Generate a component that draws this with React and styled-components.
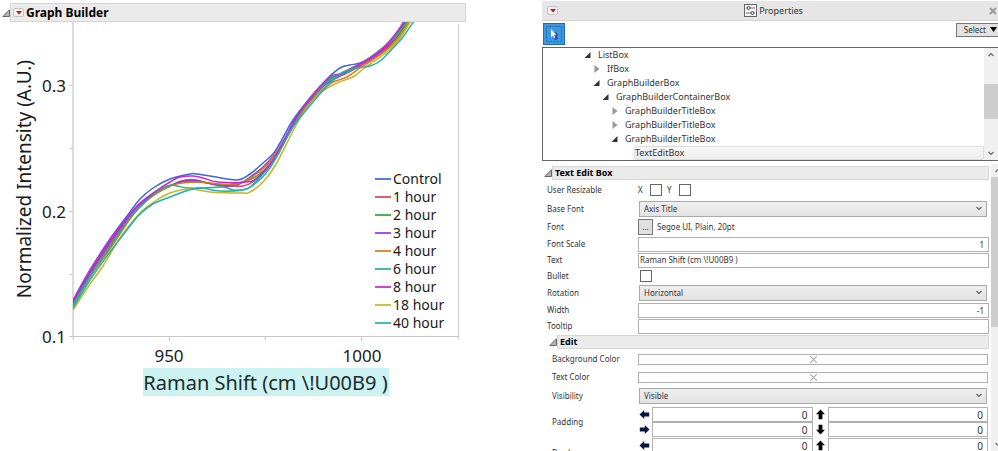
import React, { useState } from "react";
import styled, { createGlobalStyle, css } from "styled-components";

const series = [
  {
    name: "Control",
    color: "#3a68d8",
    points: [[73, 300], [90, 270], [110, 239], [130, 212], [140, 199], [153, 188], [170, 179], [190, 174], [197, 174], [210, 176], [237, 180], [250, 174], [263, 163], [273, 154], [280, 143], [293, 120], [310, 98], [327, 79], [340, 68], [350, 65], [360, 63], [373, 56], [387, 45], [397, 33], [404, 21]],
  },
  {
    name: "1 hour",
    color: "#d9405a",
    points: [[73, 303], [90, 274], [110, 244], [130, 217], [140, 206], [153, 195], [170, 186], [182, 182], [200, 182], [220, 185], [243, 186], [254, 181], [268, 168], [282, 146], [294, 124], [310, 101], [330, 80], [345, 74], [360, 66], [380, 54], [395, 40], [408, 21]],
  },
  {
    name: "2 hour",
    color: "#2fa33a",
    points: [[73, 304], [90, 276], [110, 247], [130, 218], [140, 206], [153, 195], [170, 186], [182, 181], [195, 180], [208, 183], [225, 185], [243, 182], [257, 176], [270, 164], [283, 144], [295, 123], [310, 100], [328, 80], [340, 74], [360, 64], [380, 52], [395, 39], [408, 21]],
  },
  {
    name: "3 hour",
    color: "#9a35dd",
    points: [[73, 302], [90, 273], [110, 242], [130, 215], [140, 204], [153, 194], [170, 186], [182, 181], [193, 180], [208, 183], [222, 186], [237, 185], [250, 177], [263, 167], [275, 154], [285, 138], [296, 118], [310, 100], [325, 85], [340, 76], [357, 66], [375, 56], [390, 43], [406, 21]],
  },
  {
    name: "4 hour",
    color: "#d67a20",
    points: [[73, 305], [90, 277], [110, 249], [130, 219], [140, 207], [153, 196], [170, 186], [182, 183], [200, 182], [220, 184], [237, 184], [252, 177], [266, 166], [280, 147], [292, 128], [307, 106], [323, 89], [333, 82], [347, 77], [360, 68], [380, 55], [396, 41], [410, 21]],
  },
  {
    name: "6 hour",
    color: "#25b189",
    points: [[73, 306], [90, 276], [110, 246], [130, 218], [140, 207], [153, 195], [163, 188], [171, 185], [177, 186], [188, 188], [203, 188], [223, 187], [233, 190], [242, 190], [250, 187], [260, 177], [275, 158], [290, 131], [305, 105], [320, 88], [335, 77], [350, 71], [363, 62], [380, 50], [395, 37], [407, 21]],
  },
  {
    name: "8 hour",
    color: "#d022d0",
    points: [[73, 301], [90, 271], [110, 240], [130, 214], [140, 203], [153, 193], [170, 182], [180, 177], [193, 176], [203, 178], [218, 182], [247, 182], [257, 178], [270, 164], [283, 143], [295, 120], [310, 98], [330, 77], [340, 74], [350, 69], [367, 60], [383, 48], [393, 37], [405, 21]],
  },
  {
    name: "18 hour",
    color: "#c3b723",
    points: [[73, 310], [88, 287], [103, 266], [120, 238], [140, 213], [157, 200], [170, 193], [190, 189], [210, 192], [242, 193], [250, 192], [263, 182], [275, 166], [290, 137], [303, 113], [320, 93], [337, 83], [353, 77], [363, 69], [373, 62], [383, 55], [397, 42], [411, 21]],
  },
  {
    name: "40 hour",
    color: "#22b0b5",
    points: [[73, 308], [90, 280], [110, 252], [130, 226], [140, 214], [153, 204], [170, 197], [183, 192], [193, 189], [202, 188], [220, 191], [242, 190], [252, 186], [267, 172], [280, 151], [293, 127], [313, 102], [330, 83], [343, 72], [357, 68], [370, 66], [380, 61], [393, 48], [403, 37], [414, 21]],
  },
];

const tree = [
  { name: "ListBox", depth: 0, open: true },
  { name: "IfBox", depth: 1, open: false },
  { name: "GraphBuilderBox", depth: 1, open: true },
  { name: "GraphBuilderContainerBox", depth: 2, open: true },
  { name: "GraphBuilderTitleBox", depth: 3, open: false },
  { name: "GraphBuilderTitleBox", depth: 3, open: false },
  { name: "GraphBuilderTitleBox", depth: 3, open: true },
  { name: "TextEditBox", depth: 4, leaf: true },
];

// catmull-rom through the samples
const toPath = (p) => {
  let d = `M${p[0][0]} ${p[0][1]}`;
  for (let i = 0; i < p.length - 1; i++) {
    const a = p[i - 1] || p[i];
    const b = p[i];
    const c = p[i + 1];
    const e = p[i + 2] || c;
    d += ` C${b[0] + (c[0] - a[0]) / 6} ${b[1] + (c[1] - a[1]) / 6} ${
      c[0] - (e[0] - b[0]) / 6
    } ${c[1] - (e[1] - b[1]) / 6} ${c[0]} ${c[1]}`;
  }
  return d;
};

const Disclosure = () => (
  <svg width="8" height="8" viewBox="0 0 8 8" aria-hidden="true">
    <path d="M7.5 .8v6.7H.8z" fill="#b5b5b5" stroke="#666" />
  </svg>
);

const TreeArrow = ({ open }) => (
  <svg width="8" height="8" viewBox="0 0 8 8" aria-hidden="true">
    {open ? (
      <path d="M6.500 1v6H.5z" fill="#333" />
    ) : (
      <path d="M1.500 0v8l5-4z" fill="#999" />
    )}
  </svg>
);

const RedTriangle = () => (
  <svg width="10" height="8" viewBox="0 0 10 8" aria-hidden="true">
    <path d="M2 2h6L5 5.500z" fill="#d00d14" />
  </svg>
);

const Chevron = ({ up }) => (
  <svg width="6" height="5" viewBox="0 0 6 5" aria-hidden="true">
    <path
      d={up ? "M.5 4 3 1.500 5.500 4" : "M.5 1 3 3.500 5.500 1"}
      fill="none"
      stroke="#666"
      strokeWidth="1.2"
    />
  </svg>
);

const Cross = ({ size, color, width }) => (
  <svg width={size} height={size} viewBox="0 0 8 8" aria-hidden="true">
    <path d="M1 1l6 6M7 1L1 7" stroke={color} strokeWidth={width} />
  </svg>
);

const angles = { right: 0, down: 90, left: 180, up: 270 };
const Arrow = ({ to }) => {
  const vertical = to === "up" || to === "down";
  return (
    <svg width="11" height="11" viewBox="0 0 11 11" aria-hidden="true">
      <path
        d="M.8 3.600h5V1L10.500 5.500 5.800 10V7.400h-5z"
        fill={vertical ? "#000" : "#0b1440"}
        transform={`rotate(${angles[to]} 5.500 5.500)`}
      />
    </svg>
  );
};

const GraphBuilder = () => {
  const [title, setTitle] = useState("Raman Shift (cm \\!U00B9 )");

  return (
    <GraphPanel>
      <Outline>
        <Disclosure />
        <GraphHeader>
          <MenuButton aria-label="Graph Builder menu">
            <RedTriangle />
          </MenuButton>
          Graph Builder
        </GraphHeader>
      </Outline>
      <Plot>
        <YTitle>Normalized Intensity (A.U.)</YTitle>
        <Chart viewBox="40 22 426 346" role="img" aria-label="Raman spectra">
          <clipPath id="frame">
            <rect x="73" y="22" width="385" height="314" />
          </clipPath>
          <path d="M73 22V337" stroke="#dcdcdc" strokeWidth="2" />
          <path
            d="M69 85.500h4M69 211.500h4M69 336.500h389M70 148.500h3M70 274.500h3"
            stroke="#c8c8c8"
          />
          <path
            d="M458.500 24v315M73.500 337v3M169.500 337v4M265.500 337v3M361.500 337v4"
            stroke="#c8c8c8"
          />
          <g clipPath="url(#frame)" fill="none" strokeWidth="1.500">
            {series.map((s) => (
              <path key={s.name} d={toPath(s.points)} stroke={s.color} />
            ))}
          </g>
          <g fontSize="17" fill="#1a1a1a">
            <text x="66" y="92" textAnchor="end">0.3</text>
            <text x="66" y="218" textAnchor="end">0.2</text>
            <text x="66" y="343" textAnchor="end">0.1</text>
            <text x="169" y="362" textAnchor="middle">950</text>
            <text x="362" y="362" textAnchor="middle">1000</text>
          </g>
          <g fontSize="14" fill="#1a1a1a">
            {series.map((s, i) => (
              <React.Fragment key={s.name}>
                <path
                  d={`M375 ${179 + i * 18}h16`}
                  stroke={s.color}
                  strokeWidth="2"
                  opacity=".85"
                />
                <text x="393" y={184 + i * 18}>{s.name}</text>
              </React.Fragment>
            ))}
          </g>
        </Chart>
        <XTitle
          aria-label="X axis title"
          value={title}
          onChange={(e) => setTitle(e.target.value)}
        />
      </Plot>
    </GraphPanel>
  );
};

const Dropdown = ({ id, value }) => (
  <SelectWrap>
    <Select id={id} defaultValue={value}>
      <option>{value}</option>
    </Select>
    <Chevron />
  </SelectWrap>
);

const Sides = ({ label, pairs }) => (
  <Row $inset>
    <span>{label}</span>
    <SideGrid>
      {pairs.flat().map((side) => (
        <React.Fragment key={side}>
          <Arrow to={side} />
          <Field $number $large aria-label={`${label} ${side}`} defaultValue="0" />
        </React.Fragment>
      ))}
    </SideGrid>
  </Row>
);

const Properties = () => (
  <PropertiesPanel>
    <TitleBar>
      <MenuButton aria-label="Properties menu">
        <RedTriangle />
      </MenuButton>
      <TitleText>
        <svg width="13" height="13" viewBox="0 0 13 13" aria-hidden="true">
          <rect x=".5" y=".5" width="12" height="12" fill="#f4f4f4" stroke="#666" />
          <path d="M2 4h9M2 9h9" stroke="#777" />
          <circle cx="4.500" cy="4" r="1.500" fill="#ddd" stroke="#555" />
          <circle cx="8.500" cy="9" r="1.500" fill="#ddd" stroke="#555" />
        </svg>
        Properties
      </TitleText>
      <CloseButton aria-label="Close">
        <Cross size="8" color="#999" width="1.800" />
      </CloseButton>
    </TitleBar>
    <Toolbar>
      <PickButton aria-label="Pick box">
        <svg width="18" height="18" viewBox="0 0 18 18" aria-hidden="true">
          <rect
            x="1.500"
            y="1.500"
            width="15"
            height="15"
            fill="none"
            stroke="#1d6cb8"
            strokeDasharray="2 1"
          />
          <path d="M8 10l2 5 3-1-1.500-3 2-.5-3-4z" fill="#3048b0" />
          <path d="M6 4v8.500l2-2 1.200 2.500 1-.6-1-2.400h2.300z" fill="#fff" />
        </svg>
      </PickButton>
      <SelectMenu>
        Select
        <svg width="8" height="6" viewBox="0 0 8 6" aria-hidden="true">
          <path d="M0 0h7L3.500 5z" fill="#000" />
        </svg>
      </SelectMenu>
    </Toolbar>
    <Tree>
      <TreeList>
        {tree.map((node, i) => (
          <TreeItem key={i} $depth={node.depth}>
            {!node.leaf && <TreeArrow open={node.open} />}
            <TreeLabel $selected={node.leaf}>{node.name}</TreeLabel>
          </TreeItem>
        ))}
      </TreeList>
      <ScrollBar $before={27} $size={35}>
        <Chevron up />
        <i />
        <Chevron />
      </ScrollBar>
    </Tree>
    <Body>
      <Form>
        <Outline>
          <Disclosure />
          <SectionHeader>Text Edit Box</SectionHeader>
        </Outline>
        <Row $height={20}>
          <span>User Resizable</span>
          <Checks>
            <label htmlFor="resize-x">X</label>
            <Check id="resize-x" />
            <label htmlFor="resize-y">Y</label>
            <Check id="resize-y" />
          </Checks>
        </Row>
        <Row $height={18}>
          <label htmlFor="base-font">Base Font</label>
          <Dropdown id="base-font" value="Axis Title" />
        </Row>
        <Row $height={18}>
          <label htmlFor="font">Font</label>
          <FontPick>
            <FontButton id="font">...</FontButton>
            Segoe UI, Plain, 20pt
          </FontPick>
        </Row>
        <Row $height={16}>
          <label htmlFor="scale">Font Scale</label>
          <Field id="scale" $number defaultValue="1" />
        </Row>
        <Row $height={16}>
          <label htmlFor="text">Text</label>
          <Field id="text" defaultValue={"Raman Shift (cm \\!U00B9 )"} />
        </Row>
        <Row $height={16}>
          <label htmlFor="bullet">Bullet</label>
          <Checks $alone>
            <Check id="bullet" />
          </Checks>
        </Row>
        <Row $height={18}>
          <label htmlFor="rotation">Rotation</label>
          <Dropdown id="rotation" value="Horizontal" />
        </Row>
        <Row $height={16}>
          <label htmlFor="width">Width</label>
          <Field id="width" $number defaultValue="-1" />
        </Row>
        <Row $height={16}>
          <label htmlFor="tooltip">Tooltip</label>
          <Field id="tooltip" />
        </Row>
        <Outline $nested>
          <Disclosure />
          <SectionHeader>Edit</SectionHeader>
        </Outline>
        <Row $height={18} $inset>
          <label htmlFor="background">Background Color</label>
          <ColorButton id="background">
            <Cross size="9" color="#aaa" width="1" />
          </ColorButton>
        </Row>
        <Row $height={18} $inset>
          <label htmlFor="color">Text Color</label>
          <ColorButton id="color">
            <Cross size="9" color="#aaa" width="1" />
          </ColorButton>
        </Row>
        <Row $height={20} $inset>
          <label htmlFor="visibility">Visibility</label>
          <Dropdown id="visibility" value="Visible" />
        </Row>
        <Sides label="Padding" pairs={[["left", "up"], ["right", "down"]]} />
        <Sides label="Border" pairs={[["left", "up"], ["right", "down"]]} />
      </Form>
      <ScrollBar $before={4} $size={150}>
        <Chevron up />
        <i />
        <Chevron />
      </ScrollBar>
    </Body>
  </PropertiesPanel>
);

const App = () => (
  <>
    <GlobalStyle />
    <Workspace>
      <GraphBuilder />
      <Properties />
    </Workspace>
  </>
);

const GlobalStyle = createGlobalStyle`
  * {
    box-sizing: border-box;
  }
  body {
    margin: 0;
    background: #fff;
    color: #333;
    font: 9px/12px "Noto Sans", "Open Sans", sans-serif;
  }
  button, input, select {
    font: inherit;
    color: inherit;
    margin: 0;
    padding: 0;
    border-radius: 0;
  }
  svg {
    display: block;
    flex: none;
  }
`;

const Workspace = styled.main`
  display: grid;
  grid-template-columns: minmax(0, 466fr) minmax(0, 456fr);
  gap: 76px;
  height: 100vh;
  overflow: hidden;
`;

const GraphPanel = styled.section`
  padding-top: 3px;
`;

const Outline = styled.div`
  display: flex;
  align-items: center;
  padding-left: ${(props) => (props.$nested ? "7px" : "2px")};
  margin: ${(props) => (props.$nested ? "1px 0" : "0")};
`;

const headerBox = css`
  flex: 1;
  display: flex;
  align-items: center;
  background: #ebebeb;
  border: 1px solid #d6d6d6;
  color: #000;
  font-weight: 700;
  margin: 0;
`;

const GraphHeader = styled.h1`
  ${headerBox}
  height: 19px;
  padding-left: 2px;
  gap: 2px;
  font-size: 12px;
`;

const SectionHeader = styled.h2`
  ${headerBox}
  height: 14px;
  padding-left: 2px;
  font-size: 9px;
`;

const MenuButton = styled.button`
  display: grid;
  place-items: center;
  width: 11px;
  height: 9px;
  border: 1px solid #c4c4c4;
  border-radius: 2px;
  background: #f2f2f2;
`;

const Plot = styled.div`
  display: grid;
  grid-template-columns: 40px 1fr;
`;

const YTitle = styled.div`
  justify-self: end;
  align-self: center;
  margin-bottom: 32px;
  writing-mode: vertical-rl;
  transform: rotate(180deg);
  color: #1a1a1a;
  font-size: 19px;
  line-height: 32px;
  white-space: nowrap;
`;

const Chart = styled.svg`
  width: 100%;
  height: auto;
`;

const XTitle = styled.input`
  grid-column: 2;
  justify-self: center;
  width: 246px;
  height: 28px;
  margin-left: 25px;
  border: 0;
  background: #ccf2f2;
  color: #1a2c2c;
  font-size: 20px;
  text-align: center;
`;

const PropertiesPanel = styled.section`
  display: flex;
  flex-direction: column;
  min-height: 0;
  height: 100vh;
  padding-top: 1px;
`;

const TitleBar = styled.header`
  display: flex;
  align-items: center;
  height: 20px;
  flex: none;
  padding: 0 1px 0 5px;
  background: #e6e6e6;
  border-bottom: 1px solid #d4d4d4;
`;

const TitleText = styled.h2`
  flex: 1;
  display: flex;
  align-items: center;
  justify-content: center;
  gap: 2px;
  margin: 0;
  font-size: 9px;
  font-weight: 400;
`;

const CloseButton = styled.button`
  border: 0;
  background: none;
`;

const Toolbar = styled.div`
  display: flex;
  justify-content: space-between;
  align-items: flex-start;
  flex: none;
  height: 26px;
  padding: 2px 0 0 1px;
`;

const PickButton = styled.button`
  display: grid;
  place-items: center;
  width: 22px;
  height: 22px;
  border: 1px solid #1d6cb8;
  background: #3d97dd;
`;

const SelectMenu = styled.button`
  display: flex;
  align-items: center;
  justify-content: flex-end;
  gap: 4px;
  width: 42px;
  height: 14px;
  border: 1px solid #777;
  border-right: 0;
  background: #e2e2e2;
  font-size: 8px;
`;

const Tree = styled.div`
  display: flex;
  flex: none;
  border: 1px solid #666;
  border-right: 0;
`;

const TreeList = styled.ul`
  flex: 1;
  margin: 0;
  padding: 0;
  list-style: none;
`;

const TreeItem = styled.li`
  display: flex;
  align-items: center;
  gap: 6px;
  height: 14px;
  padding-left: ${(props) => 41 + props.$depth * 9}px;
`;

const TreeLabel = styled.span`
  ${(props) =>
    props.$selected &&
    css`
      flex: 1;
      height: 14px;
      margin-left: 14px;
      border: 1px solid #dcdcdc;
      border-radius: 2px;
      background: linear-gradient(#f8f8f8, #ececec);
    `}
`;

const ScrollBar = styled.div`
  display: flex;
  flex-direction: column;
  align-items: center;
  width: 14px;
  flex: none;
  padding: 4px 0;
  background: #f0f0f0;

  i {
    width: 100%;
    height: ${(props) => props.$size}px;
    margin: ${(props) => props.$before}px 0 auto;
    background: #cdcdcd;
  }
`;

const Body = styled.div`
  display: flex;
  flex: 1;
  min-height: 0;
  overflow: hidden;
  margin: 3px -7px 0 0;
  gap: 2px;

  ${ScrollBar} {
    height: 100%;
  }
`;

const Form = styled.form`
  flex: 1;
  min-width: 0;
  padding-top: 2px;
  font-size: 8px;
`;

const Row = styled.div`
  display: grid;
  grid-template-columns: 91px 1fr;
  align-items: center;
  height: ${(props) => (props.$height ? `${props.$height}px` : "auto")};
  padding-left: 5px;

  > :first-child {
    padding-left: ${(props) => (props.$inset ? "5px" : "0")};
  }
`;

const Checks = styled.div`
  display: flex;
  align-items: center;
  gap: 5px;
  padding-left: ${(props) => (props.$alone ? "2px" : "0")};

  label {
    width: 7px;
  }
`;

const Check = styled.input.attrs({ type: "checkbox" })`
  appearance: none;
  width: 12px;
  height: 12px;
  border: 1px solid #666;
  background: #fff;
`;

const SelectWrap = styled.div`
  position: relative;
  margin: 0 2px 0 1px;

  svg {
    position: absolute;
    right: 5px;
    top: 5px;
    pointer-events: none;
  }
`;

const Select = styled.select`
  display: block;
  appearance: none;
  width: 100%;
  height: 16px;
  padding: 0 4px;
  border: 1px solid #aaa;
  background: linear-gradient(#efefef, #e3e3e3);
`;

const FontPick = styled.div`
  display: flex;
  align-items: center;
  gap: 4px;
`;

const FontButton = styled.button`
  width: 15px;
  height: 16px;
  border: 1px solid #777;
  background: #e0e0e0;
`;

const Field = styled.input`
  width: 100%;
  min-width: 0;
  height: 15px;
  padding: ${(props) => (props.$number ? "0 4px" : "0 1px 2px")};
  border: 1px solid #b0b0b0;
  background: #fff;
  font-size: ${(props) => (props.$large ? "10px" : "8px")};
  text-align: ${(props) => (props.$number ? "right" : "left")};
`;

const ColorButton = styled.button`
  display: grid;
  place-items: center;
  height: 11px;
  margin-right: 1px;
  border: 1px solid #b0b0b0;
  background: #fff;
`;

const SideGrid = styled.div`
  display: grid;
  grid-template-columns: 11px 1fr 11px 1fr;
  align-items: center;
  column-gap: 2px;
  padding: 1px 1px 0 1px;
`;

export default App;
